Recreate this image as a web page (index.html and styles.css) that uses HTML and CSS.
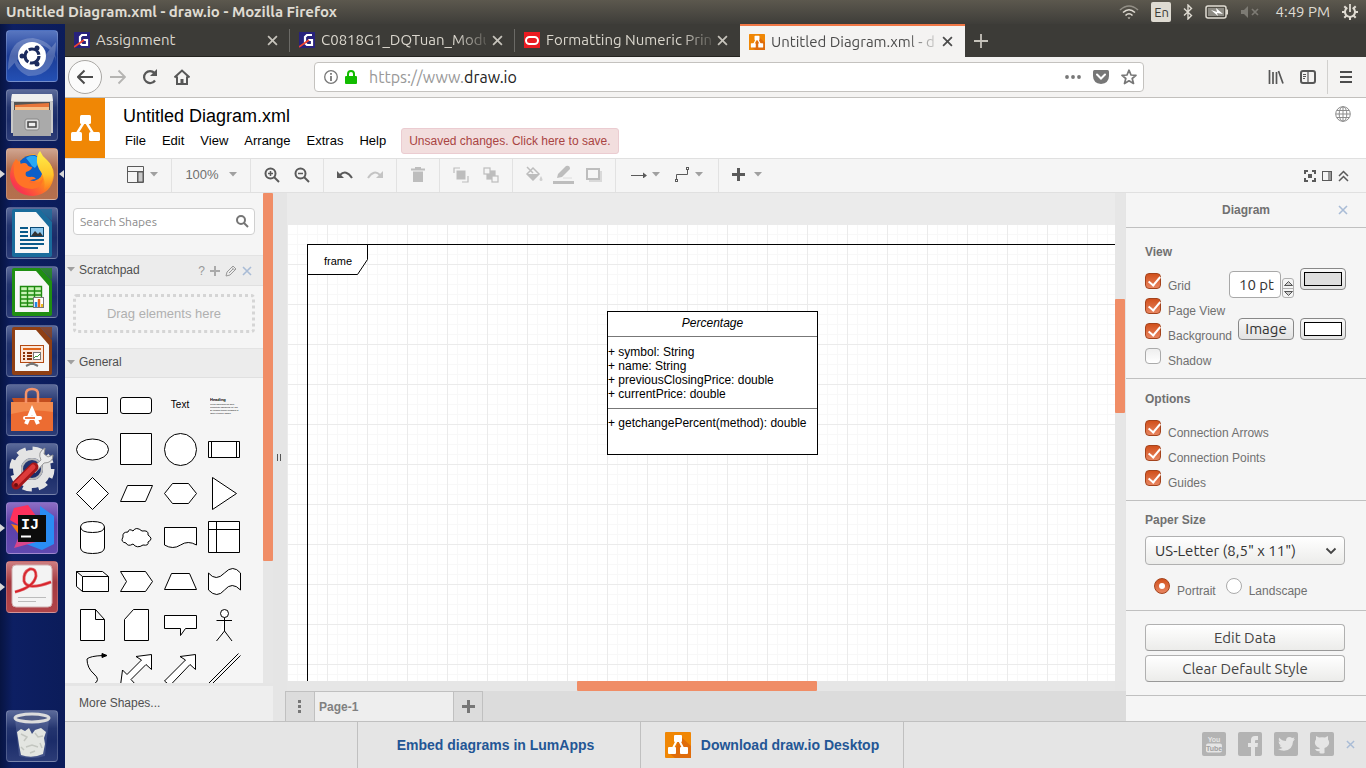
FILE: index.html
```html
<!DOCTYPE html>
<html lang="en">
<head>
<meta charset="utf-8">
<title>Untitled Diagram.xml - draw.io</title>
<link rel="stylesheet" href="styles.css">
</head>
<body>
<svg class="defs" aria-hidden="true">
  <defs>
    <linearGradient id="fire" x1="1" y1="0" x2="0" y2="1"><stop offset="0" stop-color="#ffcf2e"/><stop offset=".45" stop-color="#ff8a1c"/><stop offset=".8" stop-color="#fa3a4a"/><stop offset="1" stop-color="#e8208a"/></linearGradient>
    <linearGradient id="sun" x1="0" y1="0" x2="0" y2="1"><stop offset="0" stop-color="#fff04a"/><stop offset=".6" stop-color="#ffc52b"/><stop offset="1" stop-color="#ff7d1e"/></linearGradient>
    <symbol id="x" viewBox="0 0 10 10"><path d="M1 1 9 9M9 1 1 9" fill="none" stroke="currentColor" stroke-width="1.6"/></symbol>
    <symbol id="caret" viewBox="0 0 8 5"><path d="M0 0H8L4 4.5Z" fill="currentColor"/></symbol>
    <symbol id="logo" viewBox="0 0 30 30"><path d="M14 9 6 22M16 9 24 22" stroke="#fff" stroke-width="2.4"/><rect x="10" y="2" width="11" height="9" rx="1.5" fill="#fff"/><rect x="1" y="19" width="11" height="9" rx="1.5" fill="#fff"/><rect x="19" y="19" width="11" height="9" rx="1.5" fill="#fff"/></symbol>
    <symbol id="appicon" viewBox="0 0 26 26"><rect width="26" height="26" rx="1" fill="#f08705"/><path d="M15 4 26 14V26H10L4 21 11 15Z" fill="#df6c0c"/><path d="M12 8 7 18M14 8 19 18" stroke="#fff" stroke-width="2"/><rect x="9" y="3" width="8" height="7" rx="1" fill="#fff"/><rect x="3" y="15" width="8" height="7" rx="1" fill="#fff"/><rect x="15" y="15" width="8" height="7" rx="1" fill="#fff"/></symbol>
    <symbol id="gicon" viewBox="0 0 16 16"><rect width="16" height="16" fill="#28227c"/><path d="M13 3H8L6 5V11L8 13H13V8H9" fill="none" stroke="#fff" stroke-width="2.2"/><path d="M0 15 10 8" stroke="#f0432f" stroke-width="1.8"/></symbol>
    <symbol id="doc" viewBox="0 0 52 52"><path d="M8 2H34L46 15V48Q46 50 44 50H8Q6 50 6 48V4Q6 2 8 2Z" fill="currentColor"/><path d="M9 5H30L43 20V46H9Z" fill="#f7f7f7"/><path d="M34 2H46V14Z" fill="currentColor" opacity=".75"/></symbol>
  </defs>
</svg>

<header class="topbar">
  <h1 class="topbar-title">Untitled Diagram.xml - draw.io - Mozilla Firefox</h1>
  <div class="indicators">
    <svg width="20" height="16" viewBox="0 0 20 16" fill="none" stroke="#dfdbd2" stroke-width="1.6"><path d="M1 6Q10-2 19 6" opacity=".45"/><path d="M4 8.500Q10 3 16 8.500"/><path d="M6.500 11.500Q10 8 13.500 11.500"/><path d="M8.500 13.500H11.500L10 15Z" fill="#dfdbd2" stroke="none"/></svg>
    <span class="lang">En</span>
    <svg width="10" height="16" viewBox="0 0 10 16" fill="none" stroke="#dfdbd2" stroke-width="1.400"><path d="M1 4.500 8.500 11.500 5 15V1L8.500 4.500 1 11.500"/></svg>
    <svg width="24" height="14" viewBox="0 0 24 14"><rect x="1" y="1" width="20" height="12" rx="2" fill="none" stroke="#dfdbd2" stroke-width="1.500"/><path d="M22 4.500V9.500" stroke="#dfdbd2" stroke-width="2"/><rect x="3" y="3" width="16" height="8" fill="#8d8b84"/><path d="M6 5 12 7 11 3 18 9 12 8 13 11Z" fill="#fff"/></svg>
    <svg width="18" height="12" viewBox="0 0 18 12" fill="#7d7b74"><path d="M0 4H3L7 0V12L3 8H0Z"/><path d="M11 3 17 9M17 3 11 9" stroke="#7d7b74" stroke-width="1.700"/></svg>
    <time class="clock">4:49 PM</time>
    <svg width="16" height="16" viewBox="0 0 16 16" fill="none" stroke="#dfdbd2"><path d="M5.300 3.700A5 5 0 1 0 10.700 3.700" stroke-width="2"/><path d="M8 0V8" stroke-width="1.800"/><path d="M0 8H3M13 8H16M8 13V16M2.300 2.300 4.500 4.500M13.700 2.300 11.500 4.500M2.300 13.700 4.500 11.500M13.700 13.700 11.500 11.500" stroke-width="2"/></svg>
  </div>
</header>

<div class="desktop">
  <nav class="launcher" aria-label="Launcher">
    <button class="app blue" aria-label="Search"><svg viewBox="0 0 52 52"><path d="M2 40Q2 8 27 8Q50 12 50 32Q48 16 27 13ZM50 12Q50 47 22 46Q5 38 8 22Q12 40 27 40Z" fill="#fff" opacity=".22"/><circle cx="26" cy="26" r="14" fill="#fff"/><circle cx="26" cy="26" r="7" fill="none" stroke="#1b2b5e" stroke-width="3.200" stroke-dasharray="13 1.700"/><circle cx="16" cy="26" r="2.500" fill="#1b2b5e"/><circle cx="31" cy="18" r="2.500" fill="#1b2b5e"/><circle cx="31" cy="34" r="2.500" fill="#1b2b5e"/></svg></button>
    <button class="app" aria-label="Files"><svg viewBox="0 0 52 52"><path d="M6 5H46L47 14V44H5V14Z" fill="#c9c9c9"/><path d="M6 5H46L47 12H5Z" fill="#eee"/><rect x="8" y="13" width="36" height="10" fill="#555"/><path d="M9 16 24 15 43 14V22H9Z" fill="#e8763a"/><path d="M9 18H43V22H9Z" fill="#f7c089"/><rect x="7" y="21" width="38" height="26" fill="#aaa"/><rect x="19" y="30" width="14" height="11" rx="2" fill="#ddd" stroke="#888"/><rect x="22" y="33" width="8" height="5" fill="#eee" stroke="#444" stroke-width="1.500"/></svg></button>
    <button class="app fox run focus" aria-label="Firefox"><svg viewBox="0 0 52 52"><path d="M10 11 13 14Q19 6 28 6L36 10Q48 16 48 27Q46 46 27 48Q7 47 4 29Q4 18 10 11Z" fill="url(#fire)"/><path d="M14 13Q20 6 29 7Q37 10 37 20Q37 31 28 33Q20 33 17 26Z" fill="#0d5fc8"/><path d="M20 10Q26 6 31 9Q33 16 29 20Q25 18 24 15Z" fill="#27a8f5"/><path d="M10 11 14 16Q19 14 21 16Q22 19 26 19Q26 22 20 24Q18 29 24 29Q28 28 30 31Q25 31 23 34Q32 38 37 30Q37 40 26 41Q10 40 8 26Q7 18 10 11Z" fill="#ff7426"/><path d="M34 3Q36 8 41 12Q48 18 47 29Q45 38 38 42Q40 32 35 24Q30 17 31 11Q31 6 34 3Z" fill="url(#sun)"/></svg></button>
    <button class="app" aria-label="Writer"><svg class="c-writer" viewBox="0 0 52 52"><use href="#doc"/><path d="M14 21H22M14 25H22M14 29H22M14 33H38M14 37H38M14 41H32" stroke="#0a5a8a" stroke-width="2"/><rect x="24.500" y="20.500" width="13" height="9" fill="#8cc6ec" stroke="#0a4a75"/><path d="M25 29 29 24 32 27 34 25 37 29Z" fill="#333"/></svg></button>
    <button class="app" aria-label="Calc"><svg class="c-calc" viewBox="0 0 52 52"><use href="#doc"/><path d="M14.500 20.500H35.500V40.500H14.500ZM14 25H36M14 29H36M14 33H36M14 37H36M21.500 20V41M28.500 20V41" fill="#c9f3b5" stroke="#1f8a10" stroke-width="1.400"/><rect x="27.500" y="31.500" width="10" height="10" fill="#fff" stroke="#777"/><path d="M30 41V36" stroke="#1e88e5" stroke-width="2.500"/><path d="M33 41V33" stroke="#e0661b" stroke-width="2.500"/><path d="M36 41V38" stroke="#eebc1d" stroke-width="2"/></svg></button>
    <button class="app" aria-label="Impress"><svg class="c-impress" viewBox="0 0 52 52"><use href="#doc"/><rect x="14.500" y="20.500" width="23" height="17" fill="#fbe7da" stroke="#b34a14"/><path d="M17 24H35" stroke="#e0661b" stroke-width="2"/><path d="M17 28H19M21 28H26M17 31H19M21 31H26M17 34H19M21 34H26" stroke="#8a3208" stroke-width="2"/><rect x="27.500" y="27.500" width="7" height="7" fill="#fff" stroke="#777"/><path d="M28 33 30 31 31 32 34 29" fill="none" stroke="#3c9a3c"/><path d="M26 38V40M20 41 26 38 32 41" stroke="#777" stroke-width="2" fill="none"/></svg></button>
    <button class="app" aria-label="Software"><svg viewBox="0 0 52 52"><path d="M6 14H46L44 19H8Z" fill="#c34e1f"/><path d="M5 18H47V47H5Z" fill="#ec6c32"/><path d="M5 18H47V28Q26 24 5 30Z" fill="#f28a4e"/><path d="M20 19V10Q20 5 26 5T32 10V19" fill="none" stroke="#f4936a" stroke-width="2.500"/><path d="M20 40 26 26 32 40" fill="none" stroke="#fff" stroke-width="4"/><path d="M19 34H34" stroke="#fff" stroke-width="4" stroke-linecap="round"/><path d="M19 34H29" stroke="#ec6c32" stroke-width="1.800"/></svg></button>
    <button class="app" aria-label="Settings"><svg viewBox="0 0 52 52"><circle cx="26" cy="26" r="15" fill="none" stroke="#e4e4e4" stroke-width="8"/><circle cx="26" cy="26" r="20" fill="none" stroke="#e4e4e4" stroke-width="5" stroke-dasharray="9 6.700"/><circle cx="26" cy="26" r="10" fill="none" stroke="#b9b9b9" stroke-width="2"/><path d="M25 26 35 17Q31 9 39 5L38 11 42 14 47 12Q47 20 38 20L29 30Z" fill="#ececec" stroke="#999"/><path d="M10 42 28 24" stroke="#a3161a" stroke-width="9" stroke-linecap="round"/><path d="M10 41 27 24" stroke="#dd3b3b" stroke-width="5" stroke-linecap="round"/><circle cx="10" cy="42" r="2" fill="#6a0d10"/></svg></button>
    <button class="app purple run" aria-label="IntelliJ IDEA"><svg viewBox="0 0 52 52"><path d="M8 6 22 3 30 14 14 24 4 18Z" fill="#fe315d"/><path d="M5 22 14 24V34Z" fill="#f97a12"/><path d="M34 4 48 14V42L36 48 20 42 34 14Z" fill="#2a8df4"/><path d="M8 46 14 32 30 40Z" fill="#d8468c"/><rect x="12" y="13" width="28" height="27" fill="#0c0c0c"/><path d="M15 34.500H25" stroke="#fff" stroke-width="2"/><text class="ij" x="15" y="27">IJ</text></svg></button>
    <button class="app red run" aria-label="Document viewer"><svg viewBox="0 0 52 52"><rect x="6" y="4" width="40" height="42" rx="4" fill="#f3f3f3" stroke="#d0b0b0"/><path d="M9 31Q28 26 30 15Q30 7 24 8Q17 11 18 20Q21 30 45 21" fill="none" stroke="#e06a6e" stroke-width="3"/><path d="M9 31Q28 26 30 15Q30 7 24 8Q17 11 18 20Q21 30 45 21" fill="none" stroke="#d8222a" stroke-width="1.500"/><path d="M12 36.500H40M12 40.500H30" stroke="#bbb"/></svg></button>
    <button class="app trash" aria-label="Trash"><svg viewBox="0 0 52 52"><path d="M9 9 13 46Q26 50 39 46L43 9Z" fill="#8492bd" opacity=".3"/><ellipse cx="26" cy="8" rx="17" ry="4" fill="#4f5b86" stroke="#dcdcdc" stroke-width="3"/><path d="M11 22 15 19 19 21 23 18 26 24 29 20 35 18 40 22 38 28 39 34 37 44Q26 49 15 45L13 35 12 28Z" fill="#e3e5e1"/><path d="M15 24 21 27 18 31M29 23 32 27 37 26M20 37 26 35 32 37M24 43 29 41M15 37 18 40M34 33 36 38" fill="none" stroke="#c3c6c0" stroke-width="1.500"/></svg></button>
  </nav>

  <div class="browser">
    <div class="tabs">
      <div class="tab"><svg width="16" height="16"><use href="#gicon"/></svg><span class="tab-text">Assignment</span><button class="tab-close" aria-label="Close tab"><svg width="11" height="11"><use href="#x"/></svg></button></div>
      <div class="tab"><svg width="16" height="16"><use href="#gicon"/></svg><span class="tab-text fade">C0818G1_DQTuan_Modu</span><button class="tab-close" aria-label="Close tab"><svg width="11" height="11"><use href="#x"/></svg></button></div>
      <div class="tab"><svg width="16" height="16" viewBox="0 0 16 16"><rect width="16" height="16" fill="#ea1b22"/><rect x="2" y="5" width="12" height="7" rx="3.500" fill="none" stroke="#fff" stroke-width="2"/></svg><span class="tab-text fade">Formatting Numeric Prin</span><button class="tab-close" aria-label="Close tab"><svg width="11" height="11"><use href="#x"/></svg></button></div>
      <div class="tab active"><svg width="16" height="16"><use href="#appicon"/></svg><span class="tab-text fade">Untitled Diagram.xml - d</span><button class="tab-close" aria-label="Close tab"><svg width="11" height="11"><use href="#x"/></svg></button></div>
      <button class="new-tab" aria-label="New tab"><svg width="14" height="14" viewBox="0 0 14 14"><path d="M7 0V14M0 7H14" stroke="currentColor" stroke-width="1.800"/></svg></button>
    </div>
    <div class="navbar">
      <div class="nav-left">
        <button class="back" aria-label="Back"><svg width="16" height="16" viewBox="0 0 16 16" fill="none" stroke="#4c4c4c" stroke-width="2"><path d="M16 8H1.500M7.500 1.500 1 8 7.500 14.500"/></svg></button>
        <button class="nav-btn" aria-label="Forward"><svg width="16" height="16" viewBox="0 0 16 16" fill="none" stroke="#b5b4b2" stroke-width="1.800"><path d="M0 8H14.500M8.500 1.500 15 8 8.500 14.500"/></svg></button>
        <button class="nav-btn" aria-label="Reload"><svg width="16" height="16" viewBox="0 0 16 16" fill="none" stroke="#575757" stroke-width="2.200"><path d="M13 11.500A6 6 0 1 1 12.500 4"/><path d="M15 0V7H8Z" fill="#575757" stroke="none"/></svg></button>
        <button class="nav-btn" aria-label="Home"><svg width="16" height="16" viewBox="0 0 16 16" fill="none" stroke="#575757" stroke-width="2"><path d="M0.500 8.500 8 1.500 15.500 8.500M3 7.500V15H13V7.500"/><path d="M8 15V10" stroke-width="3"/></svg></button>
      </div>
      <div class="urlbar">
        <svg width="14" height="14" viewBox="0 0 14 14"><circle cx="7" cy="7" r="6.300" fill="none" stroke="#777" stroke-width="1.300"/><path d="M7 6V11M7 3V4.800" stroke="#777" stroke-width="1.800"/></svg>
        <svg width="12" height="14" viewBox="0 0 12 14"><path d="M3 7V4Q3 1 6 1T9 4V7" fill="none" stroke="#12bc00" stroke-width="2"/><rect y="6" width="12" height="8" rx="1" fill="#12bc00"/></svg>
        <a class="url" href="#">https://www.<b>draw.io</b></a>
        <svg width="16" height="4" viewBox="0 0 16 4" fill="#777"><circle cx="2" cy="2" r="1.900"/><circle cx="8" cy="2" r="1.900"/><circle cx="14" cy="2" r="1.900"/></svg>
        <svg width="16" height="14" viewBox="0 0 16 14"><path d="M1.500 0H14.500Q16 0 16 1.500V6Q16 13 8 14Q0 13 0 6V1.500Q0 0 1.500 0Z" fill="#777"/><path d="M4 4.500 8 8.500 12 4.500" fill="none" stroke="#fff" stroke-width="2" stroke-linecap="round"/></svg>
        <svg width="16" height="16" viewBox="0 0 16 16"><path d="M8 1.200 10 6 15 6.300 11.200 9.500 12.500 14.500 8 11.800 3.500 14.500 4.800 9.500 1 6.300 6 6Z" fill="none" stroke="#777" stroke-width="1.700" stroke-linejoin="round"/></svg>
      </div>
      <div class="nav-right">
        <button class="nav-btn" aria-label="Library"><svg width="16" height="14" viewBox="0 0 16 14" stroke="#575757" stroke-width="1.700"><path d="M1.500 0V14M5 2V14M8.500 2V14M10.500 1 15 13.500"/></svg></button>
        <button class="nav-btn" aria-label="Sidebars"><svg width="16" height="14" viewBox="0 0 16 14" fill="none" stroke="#575757"><rect x="1" y="1" width="14" height="12" rx="2" stroke-width="2"/><path d="M8 1V13M3 4.500H6M3 6.500H6M3 8.500H5" stroke-width="1.200"/></svg></button>
        <button class="nav-btn menu" aria-label="Open menu"><svg width="12" height="12" viewBox="0 0 12 12" stroke="#4c4c4c" stroke-width="2"><path d="M0 1H12M0 6H12M0 11H12"/></svg></button>
      </div>
    </div>

    <header class="app-header">
      <div class="app-logo"><svg width="30" height="30"><use href="#logo"/></svg></div>
      <div class="app-titles">
        <h2 class="doc-title">Untitled Diagram.xml</h2>
        <div class="menubar">
          <button>File</button><button>Edit</button><button>View</button><button>Arrange</button><button>Extras</button><button>Help</button>
          <button class="status">Unsaved changes. Click here to save.</button>
        </div>
      </div>
      <button class="globe" aria-label="Language"><svg width="16" height="16" viewBox="0 0 16 16" fill="none" stroke="#8c8c8c"><circle cx="8" cy="8" r="7.300"/><ellipse cx="8" cy="8" rx="3.800" ry="7.300"/><path d="M8 1V15M1 8H15M2 4.500H14M2 11.500H14"/></svg></button>
    </header>

    <div class="toolbar">
      <div class="group g-view"><button class="drop" aria-label="View"><svg width="18" height="18" viewBox="0 0 18 18" fill="none" stroke="#5a5a5a"><path d="M11 6H16V16H11Z" fill="#c8c8c8"/><path d="M.5.500H16.500V16.500H.500ZM.500 5.500H16.500M10.500 5.500V16.500"/></svg><svg class="caret"><use href="#caret"/></svg></button></div>
      <div class="group g-zoom"><button class="drop">100%<svg class="caret"><use href="#caret"/></svg></button></div>
      <div class="group"><button aria-label="Zoom in"><svg width="16" height="16" viewBox="0 0 16 16" fill="none" stroke="#5a5a5a" stroke-width="2"><circle cx="6.500" cy="6.500" r="5"/><path d="M10 10 15 15"/><path d="M6.500 4V9M4 6.500H9" stroke-width="1.500"/></svg></button><button aria-label="Zoom out"><svg width="16" height="16" viewBox="0 0 16 16" fill="none" stroke="#5a5a5a" stroke-width="2"><circle cx="6.500" cy="6.500" r="5"/><path d="M10 10 15 15"/><path d="M4 6.500H9" stroke-width="1.500"/></svg></button></div>
      <div class="group"><button aria-label="Undo"><svg width="16" height="10" viewBox="0 0 16 10"><path d="M3 5Q9-1 15 8" fill="none" stroke="#5a5a5a" stroke-width="2"/><path d="M0 1V8H7Z" fill="#5a5a5a"/></svg></button><button aria-label="Redo"><svg width="16" height="10" viewBox="0 0 16 10"><path d="M13 5Q7-1 1 8" fill="none" stroke="#c4c4c4" stroke-width="2"/><path d="M16 1V8H9Z" fill="#c4c4c4"/></svg></button></div>
      <div class="group"><button aria-label="Delete"><svg width="14" height="16" viewBox="0 0 14 16" fill="#bdbdbd"><path d="M0 1.500H4V0H10V1.500H14V3.500H0ZM2 4.500H12V15H2Z"/></svg></button></div>
      <div class="group"><button aria-label="To front"><svg width="16" height="16" viewBox="0 0 16 16" fill="none" stroke="#bdbdbd" stroke-width="1.200"><path d="M1 6V1H7M9 15H15V9"/><rect x="3.500" y="3.500" width="9" height="9" fill="#bdbdbd" stroke="none"/></svg></button><button aria-label="To back"><svg width="16" height="16" viewBox="0 0 16 16" stroke="#bdbdbd" stroke-width="1.200"><rect x="4" y="4" width="8" height="8" fill="#bdbdbd"/><rect x="1" y="1" width="6" height="6" fill="#f5f5f5"/><rect x="9" y="9" width="6" height="6" fill="#f5f5f5"/></svg></button></div>
      <div class="group"><button aria-label="Fill color"><svg width="18" height="18" viewBox="0 0 18 18"><path d="M2 8 8 2 14 8 8 14ZM2 1 8 7" fill="none" stroke="#bdbdbd" stroke-width="1.500"/><path d="M2 8H14L8 14.500Z" fill="#bdbdbd"/><path d="M16 10Q19 15 16 15T16 10Z" fill="#d0d0d0"/></svg></button><button aria-label="Line color"><svg width="22" height="20" viewBox="0 0 22 20"><path d="M4 13 5 9 13 1Q17 0 17 4L9 12Z" fill="#bdbdbd"/><path d="M10 13H19" stroke="#dcdcdc"/><path d="M0 17.500H21" stroke="#bdbdbd" stroke-width="3"/></svg></button><button aria-label="Shadow"><svg width="16" height="14" viewBox="0 0 16 14"><path d="M3 3H16V14H3Z" fill="#d9d9d9"/><rect x="1" y="1" width="12" height="10" fill="#f5f5f5" stroke="#bdbdbd" stroke-width="2"/></svg></button></div>
      <div class="group g-line"><button class="drop" aria-label="Connection"><svg width="16" height="6" viewBox="0 0 16 6"><path d="M0 3.500H14" stroke="#5a5a5a"/><path d="M12 .500 16 3.500 12 6.500Z" fill="#5a5a5a"/></svg><svg class="caret"><use href="#caret"/></svg></button><button class="drop" aria-label="Waypoints"><svg width="16" height="16" viewBox="0 0 16 16" fill="#fff" stroke="#5a5a5a"><path d="M2.500 12V7.500H13.500V3" fill="none"/><rect x="12.500" y=".500" width="2" height="2"/><rect x="1.500" y="12.500" width="2" height="2"/></svg><svg class="caret"><use href="#caret"/></svg></button></div>
      <div class="group g-insert"><button class="drop" aria-label="Insert"><svg width="13" height="13" viewBox="0 0 13 13"><path d="M6.500 0V13M0 6.500H13" stroke="#5a5a5a" stroke-width="3"/></svg><svg class="caret"><use href="#caret"/></svg></button></div>
      <div class="toolbar-end">
        <button aria-label="Fullscreen"><svg width="12" height="12" viewBox="0 0 12 12" fill="none" stroke="#5a5a5a" stroke-width="2"><path d="M1 4V1H4M8 1H11V4M11 8V11H8M4 11H1V8"/><rect x="5" y="5" width="2" height="2"/></svg></button>
        <button aria-label="Format"><svg width="10" height="10" viewBox="0 0 10 10"><rect x=".500" y=".500" width="9" height="9" fill="none" stroke="#5a5a5a"/><rect x="6" y="1" width="3" height="8" fill="#999"/></svg></button>
        <button aria-label="Collapse"><svg width="11" height="12" viewBox="0 0 11 12" fill="none" stroke="#5a5a5a" stroke-width="1.500"><path d="M1 6 5.500 1.500 10 6M1 11 5.500 6.500 10 11"/></svg></button>
      </div>
    </div>

    <main class="workspace">
      <aside class="sidebar">
        <div class="palette-wrap">
          <div class="palette">
            <div class="search"><input type="text" placeholder="Search Shapes" aria-label="Search Shapes"><svg width="13" height="13" viewBox="0 0 13 13" fill="none" stroke="#757575" stroke-width="2"><circle cx="5" cy="5" r="4"/><path d="M8 8 12 12"/></svg></div>
            <div class="section-title"><svg class="caret"><use href="#caret"/></svg><span>Scratchpad</span>
              <div class="pad-tools"><button>?</button><button aria-label="Add"><svg width="10" height="10" viewBox="0 0 10 10"><path d="M5 0V10M0 5H10" stroke="#aaa" stroke-width="2"/></svg></button><button aria-label="Edit scratchpad"><svg width="12" height="12" viewBox="0 0 12 12" fill="none" stroke="#999"><path d="M1 11 2 7 8 1 11 4 5 10ZM7 2.500 9.500 5M4 8 8 4"/></svg></button><button class="pale" aria-label="Close scratchpad"><svg width="10" height="10"><use href="#x"/></svg></button></div>
            </div>
            <div class="drop-wrap"><div class="dropzone">Drag elements here</div></div>
            <div class="section-title general"><svg class="caret"><use href="#caret"/></svg><span>General</span></div>
            <div class="shapes">
              <svg viewBox="0 0 44 44"><path d="M6.500 14.500H37.500V30.500H6.500Z"/></svg>
              <svg viewBox="0 0 44 44"><rect x="6.500" y="14.500" width="31" height="16" rx="2.500"/></svg>
              <span class="shape-text">Text</span>
              <span class="shape-note"><b>Heading</b>Lorem ipsum dolor sit amet, consectetur adipisicing elit, sed do eiusmod tempor incididunt ut labore et dolore magna.</span>
              <svg viewBox="0 0 44 44"><ellipse cx="22.500" cy="22.500" rx="16" ry="10.500"/></svg>
              <svg viewBox="0 0 44 44"><path d="M6.500 6.500H37.500V37.500H6.500Z"/></svg>
              <svg viewBox="0 0 44 44"><circle cx="22.500" cy="22.500" r="16"/></svg>
              <svg viewBox="0 0 44 44"><path d="M6.500 14.500H37.500V30.500H6.500ZM9.500 14.500V30.500M34.500 14.500V30.500"/></svg>
              <svg viewBox="0 0 44 44"><path d="M22.500 6.500 38.500 22.500 22.500 38.500 6.500 22.500Z"/></svg>
              <svg viewBox="0 0 44 44"><path d="M13.500 14.500H38.500L31.500 30.500H6.500Z"/></svg>
              <svg viewBox="0 0 44 44"><path d="M14.500 12.500H30.500L38.500 22.500 30.500 32.500H14.500L6.500 22.500Z"/></svg>
              <svg viewBox="0 0 44 44"><path d="M10.500 6.500 34.500 22.500 10.500 38.500Z"/></svg>
              <svg viewBox="0 0 44 44"><path d="M10.500 12V33Q11 38.500 22.500 38.500T34.500 33V12Q34 6.500 22.500 6.500T10.500 12Q11 17.500 22.500 17.500T34.500 12"/></svg>
              <svg viewBox="0 0 44 44"><path d="M14 17Q8 17 9 22Q6 27 12 28Q14 32 19 29Q23 34 29 30Q35 31 34 27Q40 24 34 20Q35 15 28 16Q22 11 19 16Q15 13 14 17Z"/></svg>
              <svg viewBox="0 0 44 44"><path d="M6.500 12.500H38.500V30Q30 25 22.500 30T6.500 30Z"/></svg>
              <svg viewBox="0 0 44 44"><path d="M6.500 6.500H37.500V37.500H6.500ZM14.500 6.500V37.500M6.500 14.500H37.500"/></svg>
              <svg viewBox="0 0 44 44"><path d="M6.500 12.500H32.500L38.500 17.500V32.500H12.500L6.500 27.500ZM6.500 12.500 12.500 17.500H38.500M12.500 17.500V32.500"/></svg>
              <svg viewBox="0 0 44 44"><path d="M6.500 12.500H31.500L38.500 22.500 31.500 32.500H6.500L12.500 22.500Z"/></svg>
              <svg viewBox="0 0 44 44"><path d="M13.500 14.500H31.500L38.500 30.500H6.500Z"/></svg>
              <svg viewBox="0 0 44 44"><path d="M6.500 14Q14 23 22.500 14T38.500 14V31Q30 22 22.500 31T6.500 31Z"/></svg>
              <svg viewBox="0 0 44 44"><path d="M10.500 6.500H25.500L34.500 16.500V37.500H10.500ZM25.500 6.500V16.500H34.500"/></svg>
              <svg viewBox="0 0 44 44"><path d="M19.500 6.500H34.500V37.500H10.500V16.500Z"/></svg>
              <svg viewBox="0 0 44 44"><path d="M6.500 12.500H38.500V25.500H27.500L22.500 32.500V25.500H6.500Z"/></svg>
              <svg viewBox="0 0 44 44"><circle cx="22.500" cy="10.500" r="4"/><path d="M22.500 14.500V28L14.500 38M22.500 28 30 38M14.500 17.500H30"/></svg>
              <svg viewBox="0 0 44 44"><path d="M24 37Q31 33 24 27T17 12Q20 9 33 8.500" fill="none"/><path d="M32 6.500 37 8.500 32 10.500Z" fill="#000"/></svg>
              <svg viewBox="0 0 44 44"><path d="M22 9.500 37.500 7.500V22.500L32 17.500 17 32.500 22 38 6.500 38.500 8.500 23 13 27.500 27.500 13Z"/></svg>
              <svg viewBox="0 0 44 44"><path d="M22 9.500 37.500 7.500V22.500L32 17.500 12 38.500 6.500 34 27.500 13Z"/></svg>
              <svg viewBox="0 0 44 44"><path d="M5.500 37.500 36.500 6.500M7.500 39.500 38.500 8.500"/></svg>
            </div>
          </div>
          <div class="vtrack"><div class="vthumb side"></div></div>
        </div>
        <button class="more">More Shapes...</button>
      </aside>
      <div class="splitter"><i></i></div>
      <section class="editor">
        <div class="canvas-wrap">
          <div class="canvas">
            <div class="page">
              <div class="frame"><svg width="62" height="32" viewBox="0 0 62 32"><path d="M.5.500H60.500V15.500L50.500 30.500H.500Z" fill="#fff" stroke="#000"/></svg><span>frame</span></div>
              <div class="uml">
                <div class="uml-name">Percentage</div>
                <div class="uml-fields">+ symbol: String<br>+ name: String<br>+ previousClosingPrice: double<br>+ currentPrice: double</div>
                <div class="uml-methods">+ getchangePercent(method): double</div>
              </div>
            </div>
          </div>
          <div class="vtrack"><div class="vthumb main"></div></div>
        </div>
        <div class="htrack"><div class="hthumb"></div></div>
        <div class="page-tabs">
          <button class="page-btn" aria-label="Pages"><svg width="4" height="14" viewBox="0 0 4 14" fill="#777"><path d="M0 0H3V3H0ZM0 5H3V8H0ZM0 10H3V13H0Z"/></svg></button>
          <button class="page-tab">Page-1</button>
          <button class="page-btn" aria-label="Insert page"><svg width="13" height="13" viewBox="0 0 13 13"><path d="M6.500 0V13M0 6.500H13" stroke="#777" stroke-width="3"/></svg></button>
        </div>
      </section>
      <aside class="format">
        <div class="format-title"><span>Diagram</span><button class="pale" aria-label="Close format panel"><svg width="10" height="10"><use href="#x"/></svg></button></div>
        <div class="format-sec">
          <h3>View</h3>
          <div class="row"><input type="checkbox" id="grid" checked><label for="grid">Grid</label><input class="pt" type="text" value="10 pt" aria-label="Grid size"><span class="stepper"><button aria-label="Increase"><svg width="9" height="5" viewBox="0 0 9 5"><path d="M.500 4.500 4.500.500 8.500 4.500Z" fill="#ccc" stroke="#555"/></svg></button><button aria-label="Decrease"><svg width="9" height="5" viewBox="0 0 9 5"><path d="M.500.500 4.500 4.500 8.500.500Z" fill="#ccc" stroke="#555"/></svg></button></span><button class="color grey" aria-label="Grid color"><i></i></button></div>
          <div class="row"><input type="checkbox" id="pv" checked><label for="pv">Page View</label></div>
          <div class="row"><input type="checkbox" id="bg" checked><label for="bg">Background</label><button class="image">Image</button><button class="color" aria-label="Background color"><i></i></button></div>
          <div class="row"><input type="checkbox" id="sh"><label for="sh">Shadow</label></div>
        </div>
        <div class="format-sec options">
          <h3>Options</h3>
          <div class="row"><input type="checkbox" id="ca" checked><label for="ca">Connection Arrows</label></div>
          <div class="row"><input type="checkbox" id="cp" checked><label for="cp">Connection Points</label></div>
          <div class="row"><input type="checkbox" id="gu" checked><label for="gu">Guides</label></div>
        </div>
        <div class="format-sec paper">
          <h3><label for="paper">Paper Size</label></h3>
          <div class="select"><select id="paper"><option>US-Letter (8,5" x 11")</option></select><svg width="12" height="8" viewBox="0 0 12 8"><path d="M1.500 1.500 6 6 10.500 1.500" fill="none" stroke="#444" stroke-width="1.800"/></svg></div>
          <div class="row radios"><input type="radio" name="o" id="po" checked><label for="po">Portrait</label><input type="radio" name="o" id="la"><label for="la">Landscape</label></div>
        </div>
        <div class="format-sec buttons"><button class="wide">Edit Data</button><button class="wide">Clear Default Style</button></div>
      </aside>
    </main>

    <footer class="footer">
      <a class="promo embed" href="#">Embed diagrams in LumApps</a>
      <a class="promo" href="#"><svg width="26" height="26"><use href="#appicon"/></svg>Download draw.io Desktop</a>
      <div class="social">
        <a href="#" aria-label="YouTube"><svg viewBox="0 0 24 24"><rect width="24" height="24" rx="2" fill="#b3b3b3"/><rect x="4" y="11.500" width="16" height="9" rx="2" fill="#e5e5e5"/><text class="yt light" x="12" y="10">You</text><text class="yt" x="12" y="19">Tube</text></svg></a>
        <a href="#" aria-label="Facebook"><svg viewBox="0 0 24 24"><rect width="24" height="24" rx="2" fill="#b3b3b3"/><path d="M13 24V15H10V11H13V8Q13 4 17 4H20V8H18Q17 8 17 9V11H20L19.500 15H17V24Z" fill="#e5e5e5"/></svg></a>
        <a href="#" aria-label="Twitter"><svg viewBox="0 0 24 24"><rect width="24" height="24" rx="2" fill="#b3b3b3"/><path d="M4 17Q7 17 8.500 16Q6 15 5.500 13.500H7Q4.500 12 4.500 9.500L6 10Q4 8 5 5.500Q8 9 12 9Q12 5 15.500 5Q17 5 18 6L20.500 5.500 19.500 7.500 21 7 19 9.500Q18.500 18.500 10 18.800Q6.500 18.800 4 17Z" fill="#e5e5e5"/></svg></a>
        <a href="#" aria-label="GitHub"><svg viewBox="0 0 24 24"><rect width="24" height="24" rx="2" fill="#b3b3b3"/><path d="M6 4 9 5.500Q12 4.800 15 5.500L18 4V7.500Q20 10 18.500 13Q17 15.500 14.500 16V21Q12 22 9.500 21V19Q6.500 20 5 17Q7.500 17 9.500 17V16Q7 15.500 5.500 13Q4 10 6 7.500Z" fill="#e5e5e5"/></svg></a>
        <button class="pale" aria-label="Hide footer"><svg width="9" height="9"><use href="#x"/></svg></button>
      </div>
    </footer>
  </div>
</div>
</body>
</html>
```

FILE: styles.css
```css
* { box-sizing: border-box; }
body {
  margin: 0;
  height: 100vh;
  display: flex;
  flex-direction: column;
  overflow: hidden;
  font: 12px/16px "Liberation Sans", Arial, sans-serif;
  color: #000;
}
button {
  margin: 0;
  padding: 0;
  border: 0;
  background: none;
  font: inherit;
  color: inherit;
  display: flex;
  align-items: center;
  justify-content: center;
}
a { text-decoration: none; color: inherit; }
svg { display: block; flex: none; }
h1, h2, h3 { margin: 0; }
.defs { position: absolute; width: 0; height: 0; }
.caret { width: 8px; height: 5px; color: #a0a0a0; }
.pale { color: #a9bcd6; }

/* System bar */
.topbar {
  height: 24px;
  flex: none;
  display: flex;
  align-items: center;
  justify-content: space-between;
  padding: 0 8px 0 6px;
  background: linear-gradient(#5c584e, #3e3d39);
  color: #dfdbd2;
  font-family: Ubuntu, "Open Sans", sans-serif;
}
.topbar-title { font-size: 15px; line-height: 24px; font-weight: 700; }
.indicators { display: flex; align-items: center; gap: 12px; }
.lang {
  width: 20px;
  height: 20px;
  border-radius: 2px;
  background: #dfdbd2;
  color: #3c3b37;
  font-size: 13px;
  line-height: 20px;
  text-align: center;
}
.clock { margin-left: 4px; font-size: 15px; }

.desktop { flex: 1; display: flex; min-height: 0; }

/* Launcher */
.launcher {
  width: 65px;
  flex: none;
  display: flex;
  flex-direction: column;
  gap: 7px;
  padding: 6px;
  background: linear-gradient(90deg, #071442, #0d1f63 20%, #0b1c5a);
}
.app {
  position: relative;
  width: 52px;
  height: 52px;
  flex: none;
  border: 1px solid #ffffff30;
  border-radius: 4px;
  background: linear-gradient(#5b6a9a, #24356f 35%, #1b2c69 60%, #2c3c77);
}
.app svg { width: 52px; height: 52px; }
.app.blue { background: linear-gradient(#5876c0, #1b3c96 50%, #2450b4); }
.app.fox { background: linear-gradient(#d0a590, #b06c4c 40%, #b5704e); }
.app.purple { background: linear-gradient(#8d6ec4, #5b3fa8 40%, #6049b0); }
.app.red { background: linear-gradient(#cd7d80, #a53a40 40%, #b04449); }
.app.trash { margin-top: auto; }
.app.run::before, .app.focus::after {
  content: "";
  position: absolute;
  top: 21px;
  left: -7px;
  border: 4px solid transparent;
  border-left: 5px solid #d8d8d8;
  border-right: 0;
}
.app.focus::after { left: auto; right: -7px; border-left: 0; border-right: 5px solid #d8d8d8; }
.c-writer { color: #1a6c9c; }
.c-calc { color: #1f8f12; }
.c-impress { color: #8f3f14; }
.ij { font: 700 15px "Liberation Mono", monospace; fill: #fff; }

/* Browser */
.browser { flex: 1; min-width: 0; display: flex; flex-direction: column; }
.tabs {
  height: 33px;
  flex: none;
  display: flex;
  background: #3c3b37;
  color: #dad6cd;
  font: 15px/32px Ubuntu, "Open Sans", sans-serif;
}
.tab {
  position: relative;
  width: 225px;
  display: flex;
  align-items: center;
  gap: 6px;
  padding: 0 12px 0 9px;
  border-bottom: 1px solid #24231f;
}
.tab:nth-child(-n+2)::after {
  content: "";
  position: absolute;
  right: 0;
  top: 5px;
  bottom: 4px;
  border-right: 1px solid #6b6a66;
}
.tab-text { flex: 1; min-width: 0; white-space: nowrap; }
.tab-text.fade { mask-image: linear-gradient(90deg, #000 calc(100% - 30px), #0003); }
.tab.active {
  background: #f4f3f2;
  color: #4c4c4c;
  border-top: 2px solid #f07746;
  border-bottom: 0;
  line-height: 28px;
}
.tab-close, .new-tab { color: #c6c3bb; }
.active .tab-close { color: #4c4c4c; }
.new-tab { width: 32px; }

.navbar {
  height: 41px;
  flex: none;
  display: flex;
  align-items: center;
  padding: 0 2px 0 3px;
  background: #f4f3f2;
  border-bottom: 1px solid #c2c0bd;
}
.nav-left, .nav-right { display: flex; align-items: center; }
.back { width: 34px; height: 34px; border: 1px solid #a9a7a4; border-radius: 50%; background: #fbfbfb; }
.nav-btn { width: 32px; height: 34px; }
.urlbar {
  flex: 1;
  height: 30px;
  margin: 0 116px;
  display: flex;
  align-items: center;
  gap: 12px;
  padding: 0 6px 0 9px;
  background: #fff;
  border: 1px solid #c4c2bf;
  border-radius: 4px;
}
.urlbar svg:nth-of-type(2) { margin-left: -5px; }
.url { flex: 1; font: 16px/28px Ubuntu, "Open Sans", sans-serif; color: #999; }
.url b { font-weight: 400; color: #222; }
.menu { width: 37px; margin-left: 3px; border-left: 1px solid #d1d0ce; }

/* Application header */
.app-header { height: 61px; flex: none; display: flex; background: #fff; border-bottom: 1px solid #e0e0e0; }
.app-logo { width: 40px; background: #f08705; display: flex; align-items: center; justify-content: center; }
.app-titles { flex: 1; padding: 6px 0 0 18px; }
.doc-title { font-size: 18px; line-height: 24px; font-weight: 400; }
.menubar { display: flex; align-items: center; gap: 16px; padding-left: 2px; font-size: 13px; }
.status {
  height: 26px;
  padding: 0 7px;
  margin-left: -1px;
  border: 1px solid #ebccd1;
  border-radius: 3px;
  background: #f2dede;
  color: #a94442;
  font-size: 12px;
}
.globe { align-self: flex-start; padding: 8px 15px; }

.toolbar {
  height: 34px;
  flex: none;
  display: flex;
  padding-left: 47px;
  background: #f5f5f5;
  border-bottom: 1px solid #e0e0e0;
  color: #707070;
}
.group { display: flex; align-items: center; padding: 0 6px 2px; border-right: 1px solid #e2e2e2; }
.group button { width: 30px; height: 30px; }
.group .drop { width: 43px; gap: 5px; }
.group.g-view { padding: 0 7px 2px 8px; }
.group.g-view .drop, .group.g-insert .drop { width: 44px; }
.group.g-zoom .drop { width: 66px; gap: 10px; font-size: 13px; }
.group.g-line { padding: 0 8px 2px; }
.group.g-insert { border: 0; }
.group.g-insert .drop { gap: 9px; }
.toolbar-end { margin-left: auto; display: flex; align-items: center; gap: 6px; padding-right: 17px; }

/* Workspace */
.workspace { flex: 1; min-height: 0; display: flex; background: #e5e5e5; }
.sidebar { width: 208px; flex: none; display: flex; flex-direction: column; gap: 3px; }
.palette-wrap { flex: 1; min-height: 0; display: flex; }
.palette { flex: 1; min-width: 0; overflow: hidden; background: #f5f5f5; }
.vtrack { width: 10px; flex: none; background: #e6e6e6; }
.vthumb { background: #f08d66; border-radius: 1px; }
.vthumb.side { height: 75%; }
.canvas-wrap .vtrack { display: flex; flex-direction: column; margin-right: 1px; }
.vthumb.main { height: 114px; margin-top: 106px; }
.search {
  display: flex;
  align-items: center;
  height: 27px;
  margin: 15px 8px 20px;
  padding-right: 5px;
  background: #fff;
  border: 1px solid #d0d0d0;
  border-radius: 4px;
}
.search input {
  flex: 1;
  min-width: 0;
  border: 0;
  outline: 0;
  padding: 0 6px;
  background: none;
  font: 12px/20px Ubuntu, "Open Sans", sans-serif;
}
.search input::placeholder { color: #8c8c8c; }
.section-title {
  height: 31px;
  display: flex;
  align-items: center;
  gap: 4px;
  padding: 0 11px 2px 2px;
  background: #ececec;
  border-top: 1px solid #e3e3e3;
  border-bottom: 1px solid #e0e0e0;
  color: #505050;
}
.pad-tools { margin-left: auto; display: flex; align-items: center; gap: 5px; padding-top: 3px; color: #999; }
.drop-wrap { height: 62px; padding: 8px; }
.dropzone {
  height: 39px;
  border: 3px dotted #d5d5d5;
  border-radius: 4px;
  color: #b0b0b0;
  font-size: 13px;
  line-height: 33px;
  text-align: center;
}
.general { height: 30px; }
.shapes { display: grid; grid-template-columns: repeat(4, 44px); padding: 5px; }
.shapes svg { width: 44px; height: 44px; fill: #fff; stroke: #000; stroke-width: 1; }
.shape-text { font-size: 10px; line-height: 44px; text-align: center; }
.shape-note { height: 18px; margin: 14px 7px 0 8px; overflow: hidden; font-size: 2px; line-height: 3px; }
.shape-note b { display: block; font-size: 4px; line-height: 6px; }
.more {
  height: 35px;
  flex: none;
  justify-content: flex-start;
  padding: 0 0 2px 14px;
  background: #eee;
  color: #505050;
}
.splitter { width: 12px; flex: none; display: flex; align-items: center; justify-content: center; }
.splitter i { width: 4px; height: 7px; border: 1px solid #555; border-width: 0 1px; }

.editor { flex: 1; min-width: 0; display: flex; flex-direction: column; }
.canvas-wrap { flex: 1; min-height: 0; display: flex; padding-left: 2px; }
.canvas { flex: 1; min-width: 0; padding-top: 31px; background: #ebebeb; display: flex; }
.page {
  position: relative;
  flex: 1;
  overflow: hidden;
  background-color: #fff;
  background-image:
    linear-gradient(90deg, #ebebeb 1px, transparent 1px),
    linear-gradient(#ebebeb 1px, transparent 1px),
    linear-gradient(90deg, #f8f8f8 1px, transparent 1px),
    linear-gradient(#f8f8f8 1px, transparent 1px);
  background-size: 40px 40px, 40px 40px, 10px 10px, 10px 10px;
}
.frame {
  position: absolute;
  left: 20px;
  top: 20px;
  right: 0;
  bottom: 0;
  border: 1px solid #000;
  border-width: 1px 0 0 1px;
  font-size: 11px;
}
.frame svg { position: absolute; left: -1px; top: -1px; }
.frame span { position: absolute; left: 0; top: 8px; width: 60px; text-align: center; }
.uml {
  position: absolute;
  left: 320px;
  top: 87px;
  width: 211px;
  height: 144px;
  border: 1px solid #000;
  background: #fff;
  line-height: 14px;
  white-space: nowrap;
}
.uml-name { padding: 4px 0 6px; border-bottom: 1px solid #777; font-style: italic; text-align: center; }
.uml-fields { padding: 8px 0 7px; border-bottom: 1px solid #777; }
.uml-methods { padding-top: 7px; }
.htrack { height: 10px; flex: none; margin: 0 11px 0 2px; background: #e6e6e6; }
.hthumb { width: 29%; height: 10px; margin-left: 35%; background: #f08d66; border-radius: 1px; }
.page-tabs {
  height: 30px;
  flex: none;
  display: flex;
  background: #dcdcdc;
}
.page-btn { width: 30px; border: 1px solid #c0c0c0; border-bottom: 0; }
.page-tab {
  width: 138px;
  justify-content: flex-start;
  padding-left: 4px;
  background: #eee;
  border-top: 1px solid #c0c0c0;
  color: #808080;
  font-weight: 700;
}

/* Format panel */
.format { width: 240px; flex: none; background: #f5f5f5; color: #707070; }
.format-title {
  height: 35px;
  display: flex;
  align-items: center;
  padding: 0 18px 0 28px;
  border-bottom: 1px solid #c0c0c0;
  font-weight: 700;
}
.format-title span { flex: 1; text-align: center; }
.format-sec { padding: 16px 20px 10px 19px; border-bottom: 1px solid #c0c0c0; }
.format-sec h3 { height: 24px; font-size: 12px; line-height: 16px; font-weight: 700; }
.format-sec.options { padding: 12px 20px 10px 19px; }
.row { height: 25px; display: flex; align-items: flex-start; }
.row label { height: 17px; margin: 10px 0 0 7px; line-height: 17px; }
input[type="checkbox"], input[type="radio"] {
  appearance: none;
  position: relative;
  flex: none;
  width: 16px;
  height: 16px;
  margin: 5px 0 0;
  border: 1px solid #aaa;
  border-radius: 4px;
  background: linear-gradient(#eee, #fff);
}
input[type="radio"] { border-radius: 50%; background: #fff; }
input[type="checkbox"]:checked, input[type="radio"]:checked {
  border-color: #a4431c;
  background: linear-gradient(#d1501c, #e88560);
}
input[type="checkbox"]:checked::after {
  content: "";
  position: absolute;
  left: 5px;
  top: 0;
  width: 5px;
  height: 10px;
  border: solid #fff;
  border-width: 0 2px 2px 0;
  transform: rotate(40deg);
}
input[type="radio"]:checked::after {
  content: "";
  position: absolute;
  left: 4px;
  top: 4px;
  width: 6px;
  height: 6px;
  border-radius: 50%;
  background: #fff;
}
.pt {
  width: 52px;
  height: 27px;
  margin: 3px 0 0 auto;
  padding: 0 6px;
  border: 1px solid #a8a8a8;
  border-radius: 4px;
  background: #fff;
  font: 15px/20px Ubuntu, "Open Sans", sans-serif;
  color: #333;
  text-align: right;
}
.stepper { margin: 10px 6px 0 1px; width: 12px; height: 20px; border: 1px solid #b0b0b0; border-radius: 3px; }
.stepper button { width: 10px; height: 9px; }
.stepper button + button { border-top: 1px solid #b0b0b0; }
.color, .image {
  height: 22px;
  border: 1px solid #888;
  border-radius: 4px;
  background: linear-gradient(#f8f8f8, #e2e2e2);
}
.color { width: 46px; }
.color i { width: 38px; height: 14px; border: 1px solid #000; background: #fff; }
.color.grey i { background: #ddd; }
.image { width: 56px; margin: 0 6px 0 auto; font: 15px/20px Ubuntu, "Open Sans", sans-serif; color: #333; }
.format-sec.paper { padding: 11px 21px 8px 19px; }
.select { position: relative; }
.select svg { position: absolute; right: 8px; top: 11px; }
.select select {
  appearance: none;
  display: block;
  width: 100%;
  height: 29px;
  padding: 0 9px;
  border: 1px solid #b0b0b0;
  border-radius: 4px;
  background: linear-gradient(#fff, #ececea);
  font: 15px/20px Ubuntu, "Open Sans", sans-serif;
  color: #333;
}
.radios { height: 37px; padding: 8px 0 0 9px; }
.radios label + input { margin-left: 10px; }
.buttons { padding: 13px 21px 13px 19px; display: flex; flex-direction: column; gap: 4px; }
.wide {
  width: 100%;
  height: 27px;
  border: 1px solid #b0b0b0;
  border-bottom-color: #999;
  border-radius: 4px;
  background: linear-gradient(#fff, #ececea);
  font: 15px/20px Ubuntu, "Open Sans", sans-serif;
  color: #444;
}

/* Footer */
.footer {
  height: 47px;
  flex: none;
  display: flex;
  background: #e5e5e5;
  border-top: 1px solid #c0c0c0;
}
.footer::before { content: ""; width: 292px; flex: none; }
.promo {
  width: 263px;
  display: flex;
  align-items: center;
  justify-content: center;
  gap: 10px;
  border-right: 1px solid #c0c0c0;
  color: #235695;
  font-size: 14px;
  font-weight: 700;
}
.promo.embed { width: 284px; padding-right: 7px; border-left: 1px solid #c0c0c0; }
.social { margin-left: auto; display: flex; align-items: center; gap: 12px; padding: 0 11px 2px 0; }
.social svg { width: 24px; height: 24px; }
.social button svg { width: 9px; height: 9px; }
.yt { font: 700 7px "Liberation Sans", sans-serif; text-anchor: middle; fill: #a0a0a0; }
.yt.light { fill: #e5e5e5; }
```
